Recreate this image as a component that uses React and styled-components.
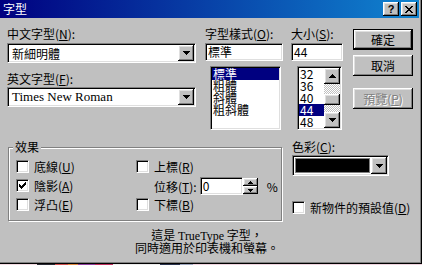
import React from "react";
import styled, { createGlobalStyle, css } from "styled-components";

const CJK = `"Noto Sans CJK TC", "Noto Sans CJK SC", "Noto Sans", sans-serif`;

const GlobalStyle = createGlobalStyle`
  html, body { margin: 0; padding: 0; }
  body {
    width: 422px;
    height: 265px;
    overflow: hidden;
    background: #c0c0c0;
    font-family: ${CJK};
    font-size: 12px;
    color: #000;
  }
`;

const raised = css`
  box-sizing: border-box;
  background: #c0c0c0;
  box-shadow: inset -1px -1px #000, inset 1px 1px #fff, inset -2px -2px #808080,
    inset 2px 2px #dfdfdf;
`;

const sunken = css`
  box-sizing: border-box;
  border: 1px solid;
  border-color: #808080 #fff #fff #808080;
  box-shadow: inset 1px 1px #000, inset -1px -1px #dfdfdf;
`;

const ICONS = {
  down: { w: 7, h: 4, r: [[0, 0, 7, 1], [1, 1, 5, 1], [2, 2, 3, 1], [3, 3, 1, 1]] },
  up: { w: 7, h: 4, r: [[3, 0, 1, 1], [2, 1, 3, 1], [1, 2, 5, 1], [0, 3, 7, 1]] },
  smallUp: { w: 5, h: 3, r: [[2, 0, 1, 1], [1, 1, 3, 1], [0, 2, 5, 1]] },
  smallDown: { w: 5, h: 3, r: [[0, 0, 5, 1], [1, 1, 3, 1], [2, 2, 1, 1]] },
  close: {
    w: 8,
    h: 7,
    r: [
      [0, 0, 2, 1], [6, 0, 2, 1],
      [1, 1, 2, 1], [5, 1, 2, 1],
      [2, 2, 4, 1],
      [3, 3, 2, 1],
      [2, 4, 4, 1],
      [1, 5, 2, 1], [5, 5, 2, 1],
      [0, 6, 2, 1], [6, 6, 2, 1],
    ],
  },
  check: {
    w: 7,
    h: 7,
    r: [
      [6, 0, 1, 1],
      [5, 1, 2, 1],
      [0, 2, 1, 1], [4, 2, 3, 1],
      [0, 3, 2, 1], [3, 3, 3, 1],
      [0, 4, 5, 1],
      [1, 5, 3, 1],
      [2, 6, 1, 1],
    ],
  },
};

const IconSvg = styled.svg`
  display: block;
  flex: none;
`;

function PixelIcon({ name, color = "#000" }) {
  const ic = ICONS[name];
  return (
    <IconSvg
      width={ic.w}
      height={ic.h}
      viewBox={`0 0 ${ic.w} ${ic.h}`}
      shapeRendering="crispEdges"
    >
      {ic.r.map(([x, y, w, h], i) => (
        <rect key={i} x={x} y={y} width={w} height={h} fill={color} />
      ))}
    </IconSvg>
  );
}

const Page = styled.div`
  width: 422px;
  height: 265px;
  display: flex;
  flex-direction: column;
`;

const Window = styled.div`
  width: 422px;
  height: 264px;
  box-sizing: border-box;
  background: #c0c0c0;
  box-shadow: inset -1px -1px #000, inset -2px -2px #808080;
  display: flex;
  flex-direction: column;
`;

const DesktopStrip = styled.div`
  height: 1px;
  background: linear-gradient(
    to right,
    #f4dce4 0 37px,
    #2a2a34 37px 55px,
    #d05050 55px 68px,
    #e08a40 68px 78px,
    #9040a0 78px 95px,
    #c03060 95px 113px,
    #ececec 113px 160px,
    #2c3450 160px 180px,
    #a0a8c0 180px 193px,
    #f0d4e0 193px
  );
`;

const TitleBar = styled.div`
  height: 18px;
  margin-right: 3px;
  box-sizing: border-box;
  padding: 0 2px 0 3px;
  display: flex;
  align-items: center;
  justify-content: space-between;
  background: linear-gradient(to right, #000080, #1084d0);
`;

const TitleText = styled.span`
  color: #fff;
  font-weight: normal;
  font-size: 12px;
  line-height: 14px;
`;

const CaptionButtons = styled.div`
  display: flex;
  gap: 2px;
`;

const CaptionButton = styled.div`
  ${raised};
  width: 16px;
  height: 14px;
  display: flex;
  align-items: center;
  justify-content: center;
`;

const HelpGlyph = styled.span`
  font-family: "Liberation Sans", Arial, sans-serif;
  font-weight: bold;
  font-size: 11px;
  line-height: 11px;
`;

const Body = styled.div`
  flex: 1;
  display: flex;
  flex-direction: column;
  padding: 9px 0 0 7px;
`;

const TopRow = styled.div`
  display: flex;
  align-items: flex-start;
`;

const Column = styled.div`
  display: flex;
  flex-direction: column;
  width: ${(p) => p.$w}px;
  margin-left: ${(p) => p.$ml || 0}px;
`;

const FieldLabel = styled.div`
  height: 14px;
  line-height: 14px;
  white-space: nowrap;
  margin-top: ${(p) => p.$mt || 0}px;
`;

const Key = styled.span`
  text-decoration: underline;
`;

const Combo = styled.div`
  ${sunken};
  background: #fff;
  width: ${(p) => p.$w}px;
  height: ${(p) => p.$h || 20}px;
  margin-top: ${(p) => p.$mt || 0}px;
  padding: 1px;
  display: flex;
  align-items: stretch;
`;

const ComboText = styled.div`
  flex: 1;
  padding-left: 3px;
  display: flex;
  align-items: center;
  white-space: nowrap;
  font-family: ${(p) => (p.$serif ? `"Liberation Serif", "Times New Roman", serif` : CJK)};
  font-size: ${(p) => (p.$serif ? 13 : 12)}px;
`;

const DropButton = styled.div`
  ${raised};
  width: 16px;
  flex: none;
  display: flex;
  align-items: center;
  justify-content: center;
`;

const ColorSwatch = styled.div`
  flex: 1;
  margin: 2px;
  background: #000;
  box-shadow: 0 0 0 1px #808080;
`;

const TextField = styled.div`
  ${sunken};
  background: #fff;
  height: 18px;
  margin-top: 2px;
  padding-left: 2px;
  line-height: 16px;
  white-space: nowrap;
`;

const ListBox = styled.div`
  ${sunken};
  background: #fff;
  width: ${(p) => p.$w}px;
  height: 64px;
  margin: 5px 0 0 ${(p) => p.$indent}px;
  padding: 1px;
  display: flex;
`;

const ListItems = styled.div`
  flex: 1;
  display: flex;
  flex-direction: column;
`;

const ListItem = styled.div`
  height: 12px;
  line-height: 12px;
  padding-left: 1px;
  white-space: nowrap;
  background: ${(p) => (p.$sel ? "#000080" : "transparent")};
  color: ${(p) => (p.$sel ? "#fff" : "#000")};
`;

const ScrollBar = styled.div`
  width: 16px;
  flex: none;
  display: flex;
  flex-direction: column;
`;

const ScrollArrow = styled.div`
  ${raised};
  height: 16px;
  display: flex;
  align-items: center;
  justify-content: center;
`;

const ScrollTrack = styled.div`
  flex: 1;
  display: flex;
  flex-direction: column;
  background: repeating-conic-gradient(#c0c0c0 0 25%, #fff 0 50%) 0 0 / 2px 2px;
`;

const ScrollThumb = styled.div`
  ${raised};
  height: 11px;
  margin-top: 10px;
`;

const PushButton = styled.div`
  ${raised};
  width: 60px;
  height: 21px;
  margin-top: ${(p) => p.$mt || 0}px;
  display: flex;
  align-items: center;
  justify-content: center;
  line-height: 14px;
  white-space: nowrap;
  ${(p) =>
    p.$default &&
    css`
      border: 1px solid #000;
    `}
  ${(p) =>
    p.$disabled &&
    css`
      color: #808080;
      text-shadow: 1px 1px 0 #fff;
    `}
`;

const LowerRow = styled.div`
  display: flex;
  align-items: flex-start;
  margin-top: 10px;
`;

const GroupBox = styled.div`
  position: relative;
  box-sizing: border-box;
  margin: 7px 0 0 1px;
  width: 274px;
  height: 74px;
  border: 1px solid #808080;
  box-shadow: 1px 1px 0 #fff, inset 1px 1px 0 #fff;
  padding: 12px 0 0 7px;
`;

const GroupTitle = styled.div`
  position: absolute;
  top: -8px;
  left: 4px;
  padding: 0 2px;
  background: #c0c0c0;
  line-height: 14px;
`;

const GroupGrid = styled.div`
  display: grid;
  grid-template-columns: 120px auto;
  grid-auto-rows: 19px;
  align-items: start;
`;

const CheckRow = styled.div`
  display: flex;
  align-items: center;
  gap: 5px;
  height: 13px;
  line-height: 13px;
  white-space: nowrap;
  margin-top: ${(p) => p.$mt || 0}px;
`;

const CheckBox = styled.div`
  ${sunken};
  width: 13px;
  height: 13px;
  flex: none;
  background: #fff;
  display: flex;
  align-items: center;
  justify-content: center;
`;

function Check({ checked, children, mt }) {
  return (
    <CheckRow $mt={mt}>
      <CheckBox>{checked && <PixelIcon name="check" />}</CheckBox>
      <span>{children}</span>
    </CheckRow>
  );
}

const OffsetRow = styled.div`
  display: flex;
  align-items: center;
  margin: -2px 0 0 18px;
  white-space: nowrap;
`;

const OffsetInput = styled.div`
  ${sunken};
  background: #fff;
  width: 43px;
  height: 18px;
  margin-left: 3px;
  padding-left: 2px;
  line-height: 16px;
`;

const Spinner = styled.div`
  width: 15px;
  height: 16px;
  display: flex;
  flex-direction: column;
`;

const SpinButton = styled.div`
  ${raised};
  flex: 1;
  display: flex;
  align-items: center;
  justify-content: center;
`;

const Percent = styled.span`
  margin-left: 9px;
`;

const FooterNote = styled.div`
  margin: 8px 0 0 120px;
  width: 160px;
  text-align: center;
  line-height: 12px;
  white-space: nowrap;
`;

const TT = styled.span`
  font-family: "Liberation Serif", "Times New Roman", serif;
  font-size: 12px;
`;

const STYLES = ["標準", "粗體", "斜體", "粗斜體"];
const SIZES = ["32", "36", "40", "44", "48"];

export default function App() {
  return (
    <>
      <GlobalStyle />
      <Page>
        <Window>
          <TitleBar>
            <TitleText>字型</TitleText>
            <CaptionButtons>
              <CaptionButton>
                <HelpGlyph>?</HelpGlyph>
              </CaptionButton>
              <CaptionButton>
                <PixelIcon name="close" />
              </CaptionButton>
            </CaptionButtons>
          </TitleBar>
          <Body>
            <TopRow>
              <Column $w={189}>
                <FieldLabel>
                  中文字型(<Key>N</Key>):
                </FieldLabel>
                <Combo $w={189} $mt={2}>
                  <ComboText>新細明體</ComboText>
                  <DropButton>
                    <PixelIcon name="down" />
                  </DropButton>
                </Combo>
                <FieldLabel $mt={9}>
                  英文字型(<Key>F</Key>):
                </FieldLabel>
                <Combo $w={189} $mt={1}>
                  <ComboText $serif>Times New Roman</ComboText>
                  <DropButton>
                    <PixelIcon name="down" />
                  </DropButton>
                </Combo>
              </Column>
              <Column $w={78} $ml={9}>
                <FieldLabel>
                  字型樣式(<Key>O</Key>):
                </FieldLabel>
                <TextField>標準</TextField>
                <ListBox $w={71} $indent={5}>
                  <ListItems>
                    {STYLES.map((s, i) => (
                      <ListItem key={s} $sel={i === 0}>
                        {s}
                      </ListItem>
                    ))}
                  </ListItems>
                </ListBox>
              </Column>
              <Column $w={52} $ml={8}>
                <FieldLabel>
                  大小(<Key>S</Key>):
                </FieldLabel>
                <TextField>44</TextField>
                <ListBox $w={45} $indent={6}>
                  <ListItems>
                    {SIZES.map((s) => (
                      <ListItem key={s} $sel={s === "44"}>
                        {s}
                      </ListItem>
                    ))}
                  </ListItems>
                  <ScrollBar>
                    <ScrollArrow>
                      <PixelIcon name="up" />
                    </ScrollArrow>
                    <ScrollTrack>
                      <ScrollThumb />
                    </ScrollTrack>
                    <ScrollArrow>
                      <PixelIcon name="down" />
                    </ScrollArrow>
                  </ScrollBar>
                </ListBox>
              </Column>
              <Column $w={60} $ml={10}>
                <PushButton $default $mt={2}>
                  確定
                </PushButton>
                <PushButton $mt={5}>取消</PushButton>
                <PushButton $mt={12} $disabled>
                  預覽(<Key>P</Key>)
                </PushButton>
              </Column>
            </TopRow>
            <LowerRow>
              <GroupBox>
                <GroupTitle>效果</GroupTitle>
                <GroupGrid>
                  <Check>
                    底線(<Key>U</Key>)
                  </Check>
                  <Check>
                    上標(<Key>R</Key>)
                  </Check>
                  <Check checked>
                    陰影(<Key>A</Key>)
                  </Check>
                  <OffsetRow>
                    <span>
                      位移(<Key>T</Key>):
                    </span>
                    <OffsetInput>0</OffsetInput>
                    <Spinner>
                      <SpinButton>
                        <PixelIcon name="smallUp" />
                      </SpinButton>
                      <SpinButton>
                        <PixelIcon name="smallDown" />
                      </SpinButton>
                    </Spinner>
                    <Percent>%</Percent>
                  </OffsetRow>
                  <Check>
                    浮凸(<Key>E</Key>)
                  </Check>
                  <Check>
                    下標(<Key>B</Key>)
                  </Check>
                </GroupGrid>
              </GroupBox>
              <Column $w={120} $ml={10}>
                <FieldLabel>
                  色彩(<Key>C</Key>):
                </FieldLabel>
                <Combo $w={97} $h={21} $mt={1}>
                  <ColorSwatch />
                  <DropButton>
                    <PixelIcon name="down" />
                  </DropButton>
                </Combo>
                <Check mt={25}>
                  新物件的預設值(<Key>D</Key>)
                </Check>
              </Column>
            </LowerRow>
            <FooterNote>
              <div>
                這是 <TT>TrueType</TT> 字型，
              </div>
              <div>同時適用於印表機和螢幕。</div>
            </FooterNote>
          </Body>
        </Window>
        <DesktopStrip />
      </Page>
    </>
  );
}
